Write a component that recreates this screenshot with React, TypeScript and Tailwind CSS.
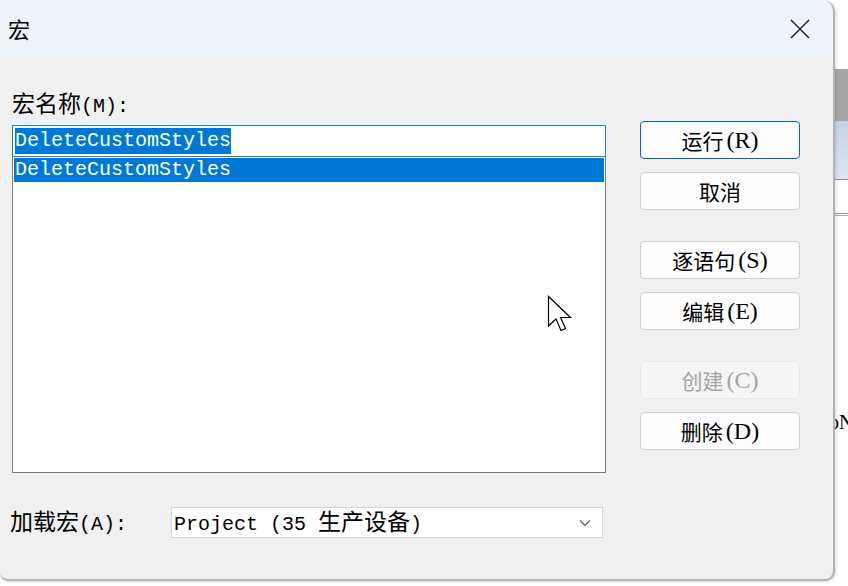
import React from "react";

const CJK = /([\u3000-\u303f\u3400-\u9fff]+)/;

// splits a string so han runs and latin runs get their own font
function Mixed({ text, latin, cjk }: { text: string; latin: string; cjk: string }) {
  return (
    <>
      {text.split(CJK).map((p, i) =>
        p ? (
          <span key={i} className={CJK.test(p) ? cjk : latin}>
            {p}
          </span>
        ) : null
      )}
    </>
  );
}

const mono = "font-['Liberation_Mono',monospace] text-[20px]";
const han = "font-['Noto_Sans_CJK_SC',sans-serif] text-[23px]";
const btnLatin = "ml-[3px] font-['Liberation_Serif',serif] text-[24px]";
const btnHan = "font-['Noto_Sans_CJK_SC',sans-serif] text-[21px]";

function Btn({ label, primary, disabled, className = "" }: { label: string; primary?: boolean; disabled?: boolean; className?: string }) {
  return (
    <button
      className={[
        "flex h-[38px] w-[160px] items-center justify-center rounded-[4px] border leading-[26px]",
        primary ? "border-[#0067c0] bg-[#fdfdfd] text-black" : "",
        disabled ? "border-[#e8e8e8] bg-[#f5f5f5] text-[#a3a3a3]" : "",
        !primary && !disabled ? "border-[#d0d0d0] bg-[#fdfdfd] text-black" : "",
        className,
      ].join(" ")}
    >
      <Mixed text={label} latin={btnLatin} cjk={btnHan} />
    </button>
  );
}

export default function App() {
  return (
    <div className="flex h-[586px] w-[848px] overflow-hidden bg-white">
      {/* dialog */}
      <div className="relative flex h-[581px] w-[835px] shrink-0 flex-col overflow-hidden rounded-tr-[12px] rounded-br-[10px] rounded-bl-[8px] border-r-2 border-b-2 border-[#b4b4b4] bg-[#f0f0f0] shadow-[1px_1px_3px_rgba(0,0,0,0.15)]">
        <div className="flex h-[56px] shrink-0 items-center justify-between bg-[#eef3f9] pl-[8px] pr-[22px]">
          <span className="font-['Noto_Sans_CJK_SC',sans-serif] text-[22px] leading-none text-black">宏</span>
          <svg width="22" height="22" viewBox="0 0 22 22" className="mt-[2px]">
            <path d="M2 2 L20 20 M20 2 L2 20" stroke="#1a1a1a" strokeWidth="1.4" fill="none" />
          </svg>
        </div>

        <div className="flex flex-1">
          {/* left column */}
          <div className="flex w-[606px] flex-col pl-[12px]">
            <div className="mt-[33px] h-[26px] leading-[26px] text-black">
              <Mixed text="宏名称(M):" latin={mono} cjk={han} />
            </div>
            <div className="mt-[10px] h-[32px] border border-[#1a7fcc] bg-white pl-[2px] pt-[2px]">
              <span className={`bg-[#0078d7] leading-[26px] text-white inline-block h-[26px] ${mono}`}>DeleteCustomStyles</span>
            </div>
            <div className="h-[316px] border border-t-0 border-[#7a7a7a] bg-white p-[1px]">
              <div className={`h-[24px] bg-[#0078d7] pl-[1px] leading-[24px] text-white ${mono}`}>DeleteCustomStyles</div>
            </div>
            <div className="-ml-[2px] mt-[34px] flex h-[31px] items-center">
              <div className="w-[161px] leading-[26px] text-black">
                <Mixed text="加载宏(A):" latin={mono} cjk={han} />
              </div>
              <div className="flex h-[31px] w-[432px] items-center justify-between border border-[#d5d5d5] bg-white pl-[2px] pr-[11px] leading-[26px] text-black">
                <span>
                  <Mixed text="Project (35 生产设备)" latin={mono} cjk={han} />
                </span>
                <svg width="12" height="8" viewBox="0 0 12 8">
                  <path d="M1 1.5 L6 6.5 L11 1.5" stroke="#5a5a5a" strokeWidth="1.2" fill="none" />
                </svg>
              </div>
            </div>
          </div>

          {/* buttons */}
          <div className="ml-[34px] flex flex-col pt-[65px]">
            <Btn label="运行(R)" primary />
            <Btn label="取消" className="mt-[13px]" />
            <Btn label="逐语句(S)" className="mt-[31px]" />
            <Btn label="编辑(E)" className="mt-[13px]" />
            <Btn label="创建(C)" disabled className="mt-[31px]" />
            <Btn label="删除(D)" className="mt-[13px]" />
          </div>
        </div>

        {/* mouse pointer */}
        <svg className="absolute left-[547px] top-[295px]" width="28" height="40" viewBox="0 0 28 40">
          <path d="M1.5 1.5 L1.5 31 L9 24 L14 35.5 L18.5 33.5 L13.5 22.5 L23.5 22.5 Z" fill="white" stroke="black" strokeWidth="1.2" strokeLinejoin="miter" />
        </svg>
      </div>

      {/* window behind */}
      <div className="flex w-[13px] flex-col overflow-hidden">
        <div className="h-[69px] bg-white" />
        <div className="h-[52px] bg-[#a6a6a6]" />
        <div className="h-[58px] bg-gradient-to-b from-[#c4d2e3] to-[#dde6f1]" />
        <div className="h-[1px] bg-[#8c8c8c]" />
        <div className="h-[33px] bg-white" />
        <div className="h-[1px] bg-[#9a9a9a]" />
        <div className="h-[1px] bg-white" />
        <div className="h-[1px] bg-[#b0b0b0]" />
        <div className="h-[196px] bg-white pt-[196px]" />
        <div className="-ml-[6px] bg-white font-['Liberation_Serif',serif] text-[20px] leading-none whitespace-nowrap text-black">oN</div>
        <div className="flex-1 bg-white" />
      </div>
    </div>
  );
}
